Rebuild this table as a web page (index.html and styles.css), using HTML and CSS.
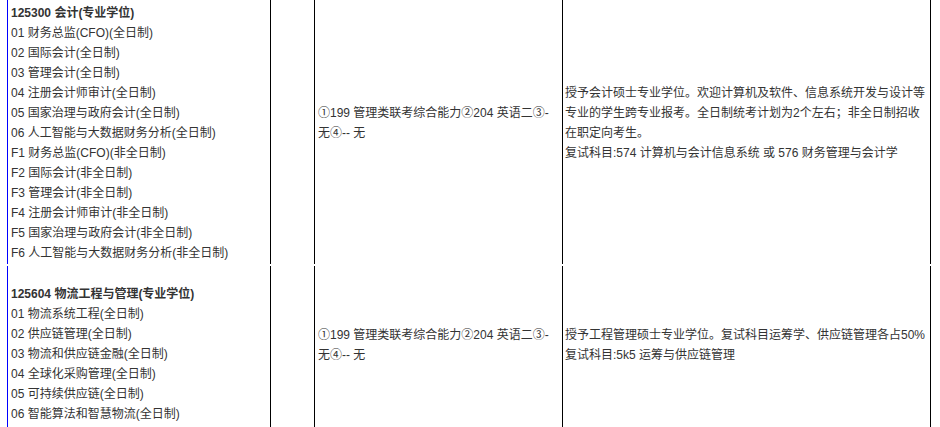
FILE: index.html
```html
<!DOCTYPE html>
<html lang="zh-CN">
<head>
<meta charset="utf-8">
<title>专业目录</title>
<link rel="stylesheet" href="styles.css">
</head>
<body>
<table class="catalog">
  <colgroup>
    <col class="c-major">
    <col class="c-empty">
    <col class="c-exam">
    <col class="c-note">
  </colgroup>
  <tbody>
    <tr class="row-first">
      <td class="cell cell-major">
        <div class="title">125300 会计(专业学位)</div>
        <div>01 财务总监(CFO)(全日制)</div>
        <div>02 国际会计(全日制)</div>
        <div>03 管理会计(全日制)</div>
        <div>04 注册会计师审计(全日制)</div>
        <div>05 国家治理与政府会计(全日制)</div>
        <div>06 人工智能与大数据财务分析(全日制)</div>
        <div>F1 财务总监(CFO)(非全日制)</div>
        <div>F2 国际会计(非全日制)</div>
        <div>F3 管理会计(非全日制)</div>
        <div>F4 注册会计师审计(非全日制)</div>
        <div>F5 国家治理与政府会计(非全日制)</div>
        <div>F6 人工智能与大数据财务分析(非全日制)</div>
      </td>
      <td class="cell cell-empty"></td>
      <td class="cell cell-exam">①199 管理类联考综合能力②204 英语二③-无④-- 无</td>
      <td class="cell cell-note">授予会计硕士专业学位。欢迎计算机及软件、信息系统开发与设计等专业的学生跨专业报考。全日制统考计划为2个左右；非全日制招收在职定向考生。<br>复试科目:574 计算机与会计信息系统 或 576 财务管理与会计学</td>
    </tr>
    <tr class="row-second">
      <td class="cell cell-major cell-major-second">
        <div class="title title-spaced">125604 物流工程与管理(专业学位)</div>
        <div>01 物流系统工程(全日制)</div>
        <div>02 供应链管理(全日制)</div>
        <div>03 物流和供应链金融(全日制)</div>
        <div>04 全球化采购管理(全日制)</div>
        <div>05 可持续供应链(全日制)</div>
        <div>06 智能算法和智慧物流(全日制)</div>
      </td>
      <td class="cell cell-empty"></td>
      <td class="cell cell-exam">①199 管理类联考综合能力②204 英语二③-无④-- 无</td>
      <td class="cell cell-note">授予工程管理硕士专业学位。复试科目运筹学、供应链管理各占50%<br>复试科目:5k5 运筹与供应链管理</td>
    </tr>
  </tbody>
</table>
</body>
</html>
```

FILE: styles.css
```css
html, body {
  margin: 0;
  padding: 0;
  background: #ffffff;
}

body {
  font-family: "Liberation Sans", "Noto Sans CJK SC", sans-serif;
  font-size: 12px;
  line-height: 20px;
  color: #333333;
}

.catalog {
  margin-left: 7px;
  width: 924px;
  table-layout: fixed;
  border-collapse: separate;
  border-spacing: 0 2px;
  margin-top: -2px;
}

.c-major { width: 264px; }
.c-empty { width: 44px; }
.c-exam { width: 248px; }
.c-note { width: 368px; }

.cell {
  box-sizing: border-box;
  padding: 1px 2px 1px 2px;
  vertical-align: middle;
  border-right: 1px solid #000000;
  word-break: normal;
}

.row-first .cell {
  padding-top: 3px;
}

.cell-major {
  border-left: 1px solid #0000ff;
  padding-left: 3px;
}

.cell-exam,
.cell-note {
  padding-bottom: 21px;
}

.cell-exam {
  padding-left: 3px;
  padding-right: 6px;
}

.cell-major-second {
  padding-bottom: 20px;
}

.title {
  font-weight: bold;
}

.title-spaced {
  margin-top: 17px;
}
```
